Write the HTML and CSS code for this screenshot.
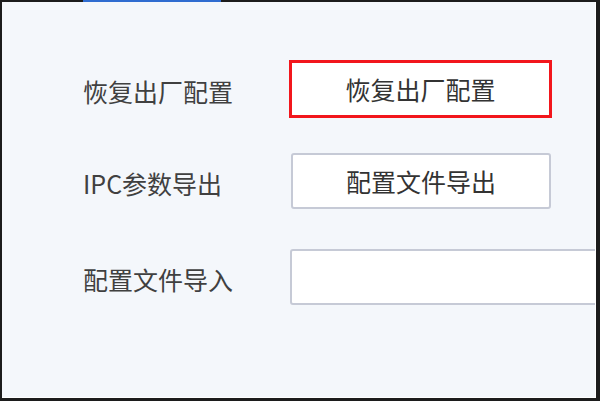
FILE: index.html
```html
<!DOCTYPE html>
<html lang="zh-CN">
<head>
<meta charset="utf-8">
<title>配置</title>
<link rel="stylesheet" href="styles.css">
</head>
<body>
<div class="frame">
  <div class="topline">
    <span class="seg-dark seg-start"></span>
    <span class="seg-blue"></span>
    <span class="seg-dark seg-fill"></span>
  </div>
  <div class="panel">
    <div class="row row-reset">
      <span class="label">恢复出厂配置</span>
      <button class="btn btn-danger">恢复出厂配置</button>
    </div>
    <div class="row row-export">
      <span class="label">IPC参数导出</span>
      <button class="btn">配置文件导出</button>
    </div>
    <div class="row row-import">
      <span class="label">配置文件导入</span>
      <div class="file-input"></div>
    </div>
  </div>
</div>
</body>
</html>
```
FILE: styles.css
```css
html, body {
  margin: 0;
  padding: 0;
  background: #1c1c1c;
}
.frame {
  width: 600px;
  height: 401px;
  box-sizing: border-box;
  border-left: 2px solid #1c1c1c;
  border-right: 4px solid #1c1c1c;
  border-bottom: 3px solid #1c1c1c;
  display: flex;
  flex-direction: column;
  overflow: hidden;
  font-family: "Noto Sans CJK SC", "Microsoft YaHei", sans-serif;
  color: #3a3a3a;
}
.topline {
  height: 2px;
  display: flex;
  flex: none;
}
.seg-dark { background: #1c1c1c; }
.seg-start { width: 81px; }
.seg-blue { width: 138px; background: #2f6cd0; }
.seg-fill { flex: 1; }
.panel {
  flex: 1;
  background: #f4f7fb;
  border-right: 1px solid #ffffff;
  border-bottom: 1px solid #ffffff;
  padding: 58px 0 0 81px;
  overflow: hidden;
}
.row {
  display: flex;
  align-items: center;
}
.row-export { margin-top: 35px; }
.row-import { margin-top: 40px; }
.label {
  width: 208px;
  flex: none;
  font-size: 25px;
  line-height: 30px;
  padding-top: 3px;
  white-space: nowrap;
  color: #404040;
}
.btn {
  box-sizing: border-box;
  width: 260px;
  height: 56px;
  background: #ffffff;
  border: 2px solid #c6cad6;
  border-radius: 3px;
  font-family: inherit;
  font-size: 25px;
  color: #333333;
  padding: 0;
  flex: none;
}
.btn-danger {
  margin-left: -2px;
  width: 263px;
  height: 58px;
  border: 3px solid #f2161c;
  border-radius: 0;
}
.file-input {
  box-sizing: border-box;
  width: 330px;
  height: 56px;
  flex: none;
  background: #ffffff;
  border: 2px solid #c6cad6;
  border-radius: 3px;
  margin-left: -1px;
}
```
